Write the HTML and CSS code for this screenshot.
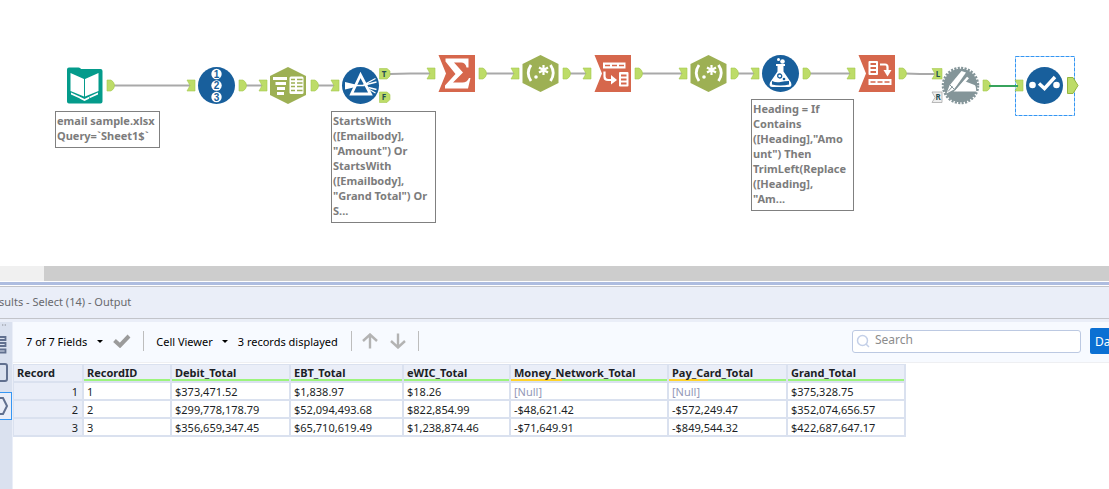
FILE: index.html
```html
<!DOCTYPE html>
<html lang="en">
<head>
<meta charset="utf-8">
<title>Workflow - Select (14)</title>
<link rel="stylesheet" href="styles.css">
</head>
<body>
<main class="app">
  <section class="canvas" aria-label="Workflow canvas">
    <svg class="diagram" aria-hidden="true">
      <defs>
        <path id="out" d="M0 -5.500H4Q7.500 -3.500 7.500 0Q7.500 3.500 4 5.500H0Z" fill="#bddc68" stroke="#a5c94f" stroke-width=".6"/>
        <path id="in" d="M0 -5.500H8V5.500H0L3 0Z" fill="#bddc68" stroke="#a5c94f" stroke-width=".6"/>
        <path id="hex" d="M0 -18.500L18 -9.500V9.500L0 18.500L-18 9.500V-9.500Z" fill="#9db054"/>
        <path id="flag" d="M-18.500 -18.500H18V18.500H-18.500L-11 0Z" fill="#d6674c"/>
        <circle id="disc" r="18.500" fill="#185f9c"/>
        <g id="regex">
          <use href="#hex"/>
          <g fill="none" stroke="#fff" stroke-width="2.800">
            <path d="M-9.500 -8.500Q-15 -.5 -9.500 7.500M10 -8.500Q15.500 -.5 10 7.500"/>
            <path stroke-width="2.200" d="M3 -8.500V1.500M-1.500 -6L7.500 -1M7.500 -6L-1.500 -1"/>
          </g>
          <circle cx="-4.500" cy="3.500" r="1.800" fill="#fff"/>
        </g>
      </defs>

      <rect x="1015.500" y="56.500" width="59" height="59" fill="none" stroke="#3596f3" stroke-dasharray="4 1"/>
      <g stroke="#a9a9a9" stroke-width="1.800" fill="none">
        <path d="M113 85.500H190M245 85.500H262M317 85.500H334M390 74L410 73.500H430M485 73.500H514M569 73.500H586M641 73.500H682M737 73.500H754M809 73.500H850M905 73.500L920 74H935"/>
      </g>
      <g>
        <use href="#out" x="107" y="85.500"/><use href="#out" x="239" y="85.500"/><use href="#out" x="311" y="85.500"/>
        <use href="#out" x="479" y="73.500"/><use href="#out" x="563" y="73.500"/><use href="#out" x="635" y="73.500"/>
        <use href="#out" x="731" y="73.500"/><use href="#out" x="803" y="73.500"/><use href="#out" x="899" y="73.500"/>
        <use href="#out" x="983" y="85.500"/>
        <use href="#in" x="187" y="85.500"/><use href="#in" x="259" y="85.500"/><use href="#in" x="331" y="85.500"/>
        <use href="#in" x="427" y="73.500"/><use href="#in" x="511" y="73.500"/><use href="#in" x="583" y="73.500"/>
        <use href="#in" x="679" y="73.500"/><use href="#in" x="751" y="73.500"/><use href="#in" x="847" y="73.500"/>
        <use href="#in" x="1015" y="85.500"/>
        <path d="M379.500 68.500H387L390 71V76L387 79H379.500ZM379.500 92H387L390 94.500V99.500L387 102.500H379.500ZM932 68.500H942V79H932L935 74Z" fill="#bddc68" stroke="#a5c94f" stroke-width=".6"/>
        <path d="M932 92H942V102.500H932L935 97.500Z" fill="#eee" stroke="#aaa" stroke-width=".8"/>
        <path d="M1067.500 77.500H1073L1078 85.500L1073 93.500H1067.500Z" fill="#bddc68" stroke="#94b53f"/>
        <path d="M989 86H1018" stroke="#37a35c" stroke-width="2"/>
      </g>
      <g class="port">
        <text x="384" y="76.500">T</text><text x="384" y="100">F</text><text x="938" y="76.500">L</text><text x="938" y="100">R</text>
      </g>

      <g transform="translate(84.500 85.500)">
        <path d="M-17.500 -16Q-17.500 -18 -15.500 -18H-6Q-4 -18 -3.500 -16.500H16Q18 -16.500 18 -14.500V16Q18 18 16 18H-15.500Q-17.500 18 -17.500 16Z" fill="#049b8b"/>
        <path d="M-14 -12.500L-.5 -6.500V11L-14 5.500ZM14 -12.500L.5 -6.500V11L14 5.500ZM-13.500 7L-4.500 11.200V13L-13.500 9ZM13.500 7L4.500 11.200V13L13.500 9ZM-5 11L0 13.500L5 11V13L0 15.500L-5 13Z" fill="#fff"/>
      </g>

      <g transform="translate(216.500 85.500)">
        <use href="#disc"/>
        <g fill="#fff"><circle cy="-11.500" r="5.200"/><circle r="5.200"/><circle cy="11.500" r="5.200"/></g>
        <g class="digit"><text y="-8">1</text><text y="3.500">2</text><text y="15">3</text></g>
      </g>

      <g transform="translate(288 85.500)">
        <use href="#hex"/>
        <path d="M-15 -8.500H-1V-5.500H-15ZM-12.500 -3.500H-2V-.5H-12.500ZM-11 1.500H-3V4.500H-11ZM-11 6.500H-4V9.500H-11Z" fill="#fff"/>
        <rect x="1.500" y="-9" width="14" height="17.500" rx="1.500" fill="#fff"/>
        <path d="M3 -6H7M9 -6H14.500M3 -2.500H7M9 -2.500H14.500M3 1H7M9 1H14.500M3 5H7M9 5H14.500" stroke="#9db054" stroke-width="1.500"/>
      </g>

      <g transform="translate(360.500 85.500)">
        <use href="#disc"/>
        <path d="M0 -10.500L-9 8.500H10Z" fill="none" stroke="#fff" stroke-width="2.800"/>
        <path d="M-15.500 -3.500L-5 -1V1.500L-15.500 4Z" fill="#fff"/>
        <path d="M-5 0H4M2 0L15 -7M2 0L16 -3.500M9 4L15 7.500M8 2L16 4" stroke="#fff" stroke-width="1.300"/>
      </g>

      <g transform="translate(457 73.500)">
        <use href="#flag"/>
        <path d="M-11.500 -15H11.500V-6H9.500Q8.500 -11 4 -11H-3L6 -1L-4 9H5.500Q10 9 12 4.500H13.500L11 15H-12V12L-1.500 .5L-11.500 -12Z" fill="#fff"/>
      </g>

      <use href="#regex" x="540.500" y="73.500"/>

      <g transform="translate(613 73.500)">
        <use href="#flag"/>
        <path d="M-10 -11H12.500V-5H-10Z" fill="#fff"/>
        <path d="M-8 -8H-3M-1 -8H4M6 -8H11" stroke="#d6674c" stroke-width="1.500"/>
        <path d="M-8.500 -2V3Q-8.500 6.500 -5 6.500H-1" fill="none" stroke="#fff" stroke-width="2.200"/>
        <path d="M-2 1.500L4 6.500L-2 11Z" fill="#fff"/>
        <rect x="6" y="-1.500" width="9.500" height="14.500" rx="1" fill="#fff"/>
        <path d="M8 2H13.500M8 6H13.500M8 10H13.500" stroke="#d6674c" stroke-width="1.800"/>
      </g>

      <use href="#regex" x="708.500" y="73.500"/>

      <g transform="translate(780.500 73.500)">
        <use href="#disc"/>
        <path d="M-3 -8V-2L-10.500 9Q-12 13.500 -8 13.500H8Q12 13.500 10.500 9L3 -2V-8Z" fill="#fff"/>
        <path d="M-4.500 -8.500H4.500" stroke="#fff" stroke-width="2"/>
        <path d="M-8.500 7.500Q-4 9.500 0 8.500T8.500 7.500L8.500 11Q5 12 0 12T-8.500 11Z" fill="#185f9c"/>
        <circle cx="-2" cy="-14" r="1.500" fill="#fff"/><circle cx="2" cy="-12" r="2.300" fill="#fff"/>
        <circle cx="-.8" cy="2.500" r="2" fill="none" stroke="#185f9c" stroke-width="1.300"/><circle cx="3.500" cy="5.500" r="1.300" fill="#185f9c"/>
      </g>

      <g transform="translate(877 73.500)">
        <use href="#flag"/>
        <rect x="-8.500" y="-12.500" width="9.500" height="14" rx="1" fill="#fff"/>
        <path d="M-6.500 -9.500H-1M-6.500 -5.500H-1M-6.500 -1.500H-1" stroke="#d6674c" stroke-width="1.800"/>
        <path d="M3 -9H8Q10.500 -9 10.500 -6.500V-2" fill="none" stroke="#fff" stroke-width="2.200"/>
        <path d="M6.500 -3.500H14.500L10.500 3Z" fill="#fff"/>
        <path d="M-8.500 5.500H14.500V11.500H-8.500Z" fill="#fff"/>
        <path d="M-6.500 8.500H-1.500M.5 8.500H5.500M7.500 8.500H12.500" stroke="#d6674c" stroke-width="1.600"/>
      </g>

      <g transform="translate(960.500 85.500)">
        <circle r="16.800" fill="#849599"/>
        <circle r="17.500" fill="none" stroke="#849599" stroke-width="2.500" stroke-dasharray="2.100 1.340"/>
        <path d="M-7 6L5 -4L14 -.5Q15.500 0 15.500 4V6Z" fill="#fff"/>
        <path d="M-14 8L-11 0L1 -14.500L5.500 -13L-6.500 4Z" fill="#fff"/>
        <path d="M-12.500 6L-8 1M-10.500 -.5L-6.500 3.500" stroke="#849599"/>
        <path d="M-4 5L7.500 -8" stroke="#fff" stroke-width="2.600"/>
        <path d="M-6 4.500L6 -10" stroke="#849599" stroke-width="1.200"/>
      </g>

      <g transform="translate(1044.500 85.500)">
        <use href="#disc"/>
        <g fill="#fff"><circle cx="-12" cy="-.5" r="3.300"/><circle cx="12" cy="-.5" r="3.300"/></g>
        <path d="M-5.500 -2L0 3L10.500 -8.500" fill="none" stroke="#fff" stroke-width="3.400"/>
      </g>
    </svg>
    <p class="note note-input">email sample.xlsx<br>Query=`Sheet1$`</p>
    <p class="note note-filter">StartsWith<br>([Emailbody],<br>"Amount") Or<br>StartsWith<br>([Emailbody],<br>"Grand Total") Or<br>S...</p>
    <p class="note note-formula">Heading = If<br>Contains<br>([Heading],"Amo<br>unt") Then<br>TrimLeft(Replace<br>([Heading],<br>"Am...</p>
  </section>

  <div class="scrollbar"><div class="thumb"></div></div>

  <section class="results">
    <header class="results-title"><h1>Results - Select (14) - Output</h1></header>
    <div class="results-body">
      <nav class="rail" aria-label="Result views">
        <svg class="rail-grip" viewBox="0 0 12 12" aria-hidden="true"><path d="M0 4.500H2M4 4.500H6" stroke="#a5a9b2" stroke-width="2"/></svg>
        <button class="rail-button" type="button" aria-label="Messages"><svg viewBox="0 0 12 26" aria-hidden="true"><path d="M-4 6H5.500V9H-4ZM-4 12H5.500V15H-4ZM-4 18.500H5.500V21.500H-4Z" fill="none" stroke="#61708f" stroke-width="1.800"/></svg></button>
        <button class="rail-button" type="button" aria-label="Input"><svg viewBox="0 0 12 26" aria-hidden="true"><rect x="-10" y="5" width="17" height="17" rx="2" fill="none" stroke="#61708f" stroke-width="2"/></svg></button>
        <button class="rail-button selected" type="button" aria-label="Output"><svg viewBox="0 0 12 26" aria-hidden="true"><path d="M-2 5H3L7 13L3 21H-2" fill="none" stroke="#61708f" stroke-width="2"/></svg></button>
      </nav>
      <div class="results-main">
        <div class="toolbar">
          <button class="menu fields" type="button">7 of 7 Fields <i class="caret"></i></button>
          <button class="icon-button check" type="button" aria-label="Apply"><svg width="18" height="14" viewBox="0 0 18 14"><path d="M1.500 6.500L7 11.500L16 2" fill="none" stroke="#9b9b9b" stroke-width="4"/></svg></button>
          <span class="divider"></span>
          <button class="menu viewer" type="button">Cell Viewer <i class="caret"></i></button>
          <span class="count">3 records displayed</span>
          <span class="divider"></span>
          <button class="icon-button arrow" type="button" aria-label="Previous"><svg width="16" height="16" viewBox="0 0 16 16"><path d="M8 15.500V1.500M1 8L8 1.500L15 8" fill="none" stroke="#b3b3b3" stroke-width="2.400"/></svg></button>
          <button class="icon-button arrow" type="button" aria-label="Next"><svg width="16" height="16" viewBox="0 0 16 16"><path d="M8 .5V14.500M1 8L8 14.500L15 8" fill="none" stroke="#b3b3b3" stroke-width="2.400"/></svg></button>
          <span class="divider"></span>
          <label class="search"><svg width="14" height="14" viewBox="0 0 14 14" aria-hidden="true"><path d="M10 10L13 13" stroke="#c4d0e8" stroke-width="1.500"/><circle cx="6.500" cy="6.500" r="5" fill="none" stroke="#c4d0e8" stroke-width="1.500"/></svg><input type="text" placeholder="Search" aria-label="Search"></label>
          <button class="data-button" type="button">Data</button>
        </div>
        <table class="grid">
          <colgroup><col class="w-record"><col class="w-id"><col class="w-debit"><col class="w-ebt"><col class="w-ewic"><col class="w-money"><col class="w-debit"><col class="w-grand"></colgroup>
          <thead>
            <tr><th>Record</th><th class="ok">RecordID</th><th class="ok">Debit_Total</th><th class="ok">EBT_Total</th><th class="ok">eWIC_Total</th><th class="partial">Money_Network_Total</th><th class="partial">Pay_Card_Total</th><th class="ok">Grand_Total</th></tr>
          </thead>
          <tbody>
            <tr><th>1</th><td>1</td><td>$373,471.52</td><td>$1,838.97</td><td>$18.26</td><td class="null">[Null]</td><td class="null">[Null]</td><td>$375,328.75</td></tr>
            <tr><th>2</th><td>2</td><td>$299,778,178.79</td><td>$52,094,493.68</td><td>$822,854.99</td><td>-$48,621.42</td><td>-$572,249.47</td><td>$352,074,656.57</td></tr>
            <tr><th>3</th><td>3</td><td>$356,659,347.45</td><td>$65,710,619.49</td><td>$1,238,874.46</td><td>-$71,649.91</td><td>-$849,544.32</td><td>$422,687,647.17</td></tr>
          </tbody>
        </table>
      </div>
    </div>
  </section>
</main>
</body>
</html>
```
FILE: styles.css
```css
* { box-sizing: border-box; }
body {
  margin: 0;
  background: #fff;
  color: #1c1f26;
  font-family: "Noto Sans", "Open Sans", sans-serif;
  font-size: 11px;
  line-height: 15px;
  overflow: hidden;
}
button, input { font: inherit; color: inherit; border: 0; margin: 0; padding: 0; background: none; }
.app { display: flex; flex-direction: column; min-height: 100vh; }

.canvas { position: relative; flex: none; height: 266px; overflow: hidden; }
.diagram { display: block; width: 100%; height: 100%; }
.port { font-size: 8px; font-weight: 700; fill: #234e52; text-anchor: middle; }
.digit { font-family: "Liberation Sans", Arial, sans-serif; font-size: 10px; font-weight: 700; fill: #185f9c; text-anchor: middle; }
.note {
  position: absolute;
  margin: 0;
  padding: 1px 1px 4px;
  width: 105px;
  border: 1px solid #808080;
  background: #fff;
  color: #7c7c7c;
  font-weight: 700;
  white-space: nowrap;
}
.note-input { left: 55px; top: 111px; }
.note-filter { left: 331px; top: 111px; }
.note-formula { left: 751px; top: 99px; width: 103px; }

.scrollbar { height: 15px; padding-left: 44px; background: #f0f0f0; }
.thumb { height: 100%; background: #cdcdcd; }

.results { flex: 1; display: flex; flex-direction: column; margin-top: 1px; border-top: 3px solid #aebde0; }
.results-title {
  height: 33px;
  margin-top: 1px;
  padding: 7px 0;
  border-top: 1px solid #c2c4ca;
  border-bottom: 1px solid #c2c4ca;
  background: #eaeef8;
}
.results-title h1 { margin: 0 0 0 -14px; font-size: 11px; font-weight: 400; color: #68696d; }
.results-body { flex: 1; display: flex; padding-top: 3px; background: #eaeef8; }
.rail { width: 12px; flex: none; display: flex; flex-direction: column; overflow: hidden; background: #dae1ef; }
.rail-grip { width: 12px; height: 8px; }
.rail-button { width: 12px; height: 28px; }
.rail-button svg { display: block; width: 12px; height: 26px; }
.rail-button.selected { margin-top: 6px; border: 1px solid #3596f3; border-left: 0; background: #eaeef8; }
.results-main { flex: 1; min-width: 0; margin-left: 1px; background: #fff; }

.toolbar {
  display: flex;
  align-items: center;
  height: 41px;
  overflow: hidden;
  padding: 0 0 2px 13px;
  border-bottom: 1px solid #eeeff2;
  background: #f7faff;
  color: #000;
  white-space: nowrap;
}
.menu { display: flex; align-items: center; gap: 10px; flex: none; }
.caret { border: 3px solid transparent; border-top-color: #000; border-bottom: 0; }
.check { margin: 0 12px 0 10px; }
.icon-button svg { display: block; }
.divider { width: 1px; height: 20px; flex: none; background: #bdbdbd; }
.viewer { margin-left: 12px; gap: 9px; }
.count { margin: 0 13px 0 10px; }
.arrow { margin-left: 10px; }
.arrow + .arrow { margin: 0 12px; }
.search {
  display: flex;
  align-items: center;
  gap: 5px;
  width: 229px;
  height: 23px;
  flex: none;
  margin-left: auto;
  padding-left: 3px;
  border: 1px solid #bcc9e2;
  border-radius: 3px;
  background: #fff;
}
.search input { width: 190px; padding-bottom: 4px; font-size: 12px; outline: 0; }
.search input::placeholder { color: #8c8c8c; opacity: 1; }
.data-button {
  width: 40px;
  height: 26px;
  flex: none;
  margin: 0 -21px 0 9px;
  padding-left: 5px;
  border-radius: 2px;
  background: #0b70d3;
  color: #fff;
  font-size: 12px;
  text-align: left;
}

.grid { table-layout: fixed; width: 893px; margin-top: 1px; border-spacing: 0; }
.w-record { width: 71px; }
.w-id { width: 88px; }
.w-debit { width: 119px; }
.w-ebt { width: 113px; }
.w-ewic { width: 107px; }
.w-money { width: 158px; }
.w-grand { width: 118px; }
.grid th, .grid td {
  height: 18px;
  padding: 0 0 0 3px;
  border-right: 2px solid #dae1ef;
  border-bottom: 2px solid #dae1ef;
  text-align: left;
  white-space: nowrap;
}
.grid th { background: #eaeef8; }
.grid tr > :first-child { border-left: 1px solid #dae1ef; }
.grid thead th { height: 19px; padding-bottom: 1px; border-top: 1px solid #dae1ef; background-repeat: no-repeat; background-position: left bottom; background-size: 100% 2px; background-clip: padding-box; }
.grid tbody th { padding-right: 4px; font-weight: 400; text-align: right; }
.grid .ok { background-image: linear-gradient(#9cf47c, #9cf47c); }
.grid .partial { background-image: linear-gradient(90deg, #ffd42a 33%, #9cf47c 33%); }
.grid .null { color: #9298b8; }
```
